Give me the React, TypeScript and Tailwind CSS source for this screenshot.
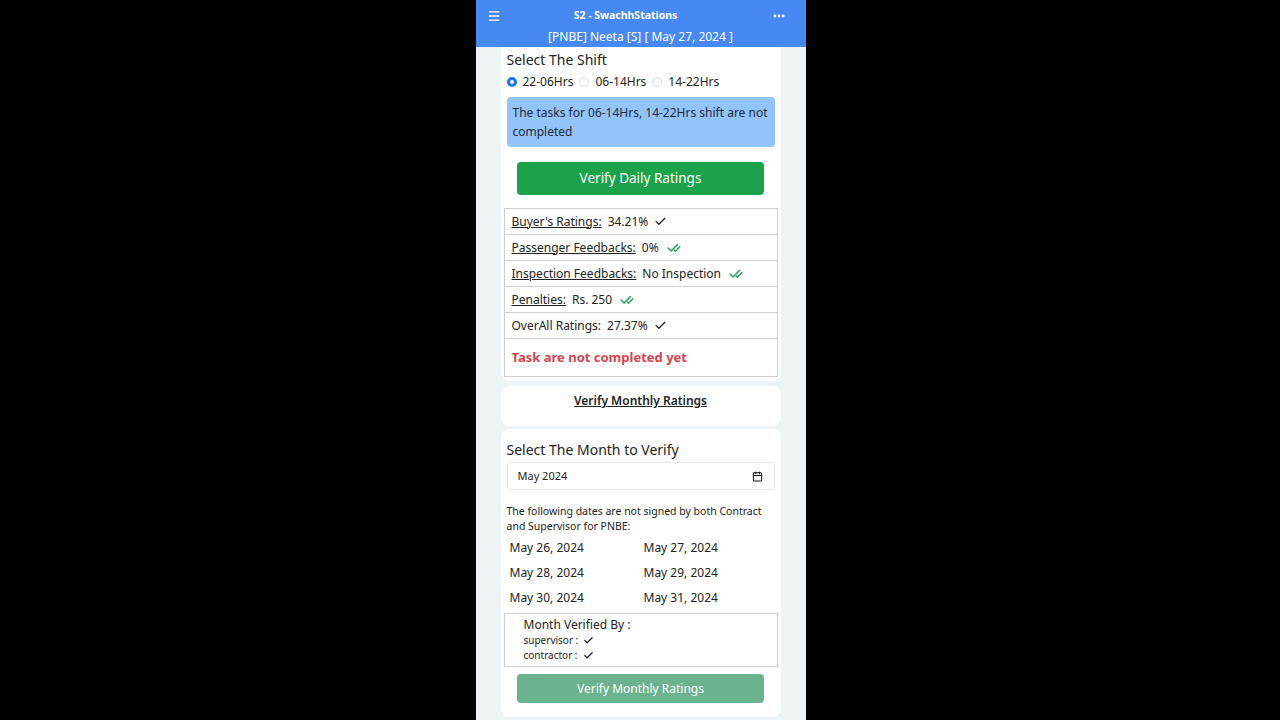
import { Menu, MoreHorizontal, Check, CheckCheck, Calendar } from 'lucide-react';

const ratings = [
  { label: "Buyer's Ratings:", value: '34.21%', double: false, underline: true },
  { label: 'Passenger Feedbacks:', value: '0%', double: true, underline: true },
  { label: 'Inspection Feedbacks:', value: 'No Inspection', double: true, underline: true },
  { label: 'Penalties:', value: 'Rs. 250', double: true, underline: true },
  { label: 'OverAll Ratings:', value: '27.37%', double: false, underline: false },
];

const dates = ['May 26, 2024', 'May 27, 2024', 'May 28, 2024', 'May 29, 2024', 'May 30, 2024', 'May 31, 2024'];

export default function App() {
  return (
    <div className="w-full h-[720px] bg-black flex justify-center overflow-hidden" style={{ fontFamily: '"Noto Sans", "Open Sans", sans-serif' }}>
      <div className="w-[330px] h-[720px] bg-[#eef3f6] flex flex-col overflow-hidden ml-[1px]">
        {/* Header */}
        <div className="h-[47px] shrink-0 bg-[#4689f5] text-white flex flex-col items-center relative">
          <Menu className="absolute left-[11px] top-[9px] w-[14px] h-[14px]" strokeWidth={2.4} />
          <MoreHorizontal className="absolute right-[20px] top-[9px] w-[14px] h-[14px]" strokeWidth={3} />
          <div className="text-[10.5px] font-bold mt-[7px] leading-[16px] -ml-[30px]">S2 - SwachhStations</div>
          <div className="text-[12px] mt-[5px] leading-[18px]">[PNBE] Neeta [S] [ May 27, 2024 ]</div>
        </div>

        <div className="flex-1 px-[25px] flex flex-col gap-[5px]">
          {/* Shift card */}
          <div className="bg-white rounded-b-lg px-[3px] pb-[4px]">
            <div className="px-[3px]">
              <div className="text-[14px] text-[#222] leading-[20px] mt-[3px]">Select The Shift</div>
              <div className="flex items-center text-[12px] text-[#222] leading-[18px] mt-[3px]">
                <span className="w-[10px] h-[10px] rounded-full border-[3px] border-[#1a73e8] bg-white mr-[6px]" />
                <span className="mr-[6px]">22-06Hrs</span>
                <span className="w-[10px] h-[10px] rounded-full border border-[#dcdcdc] mr-[6px]" />
                <span className="mr-[6px]">06-14Hrs</span>
                <span className="w-[10px] h-[10px] rounded-full border border-[#dcdcdc] mr-[6px]" />
                <span>14-22Hrs</span>
              </div>
              <div className="mt-[6px] bg-[#92c3fb] rounded-[4px] px-[6px] py-[6px] text-[12px] leading-[19px] text-[#1f2a37]">
                The tasks for 06-14Hrs, 14-22Hrs shift are not completed
              </div>
              <div className="flex justify-center mt-[15px] mb-[13px]">
                <button className="w-[247px] h-[33px] bg-[#1aa34a] text-white text-[13.5px] rounded-[4px]">Verify Daily Ratings</button>
              </div>
            </div>
            <div className="border border-[#cfcfcf]">
              {ratings.map((r, i) => (
                <div key={i} className="flex items-center h-[26px] px-[7px] border-b border-[#cfcfcf] text-[12px] text-[#222]">
                  <span className={r.underline ? 'underline' : ''}>{r.label}</span>
                  <span className="ml-[6px]">{r.value}</span>
                  {r.double ? (
                    <CheckCheck className="ml-[8px] w-[14px] h-[14px] text-[#22a35a]" strokeWidth={2.6} />
                  ) : (
                    <Check className="ml-[6px] w-[13px] h-[13px] text-[#222]" strokeWidth={2.4} />
                  )}
                </div>
              ))}
              <div className="h-[37px] flex items-center px-[7px] text-[13px] font-bold text-[#d9434a]">Task are not completed yet</div>
            </div>
          </div>

          {/* Monthly link */}
          <div className="bg-white rounded-lg h-[40px] flex justify-center pt-[6px]">
            <span className="text-[12px] font-semibold text-[#222] underline">Verify Monthly Ratings</span>
          </div>

          {/* Monthly card */}
          <div className="bg-white rounded-lg px-[3px] -mt-[2px] pb-[14px]">
            <div className="px-[3px]">
              <div className="text-[14px] text-[#222] leading-[20px] mt-[11px]">Select The Month to Verify</div>
              <div className="mt-[2px] h-[28px] border border-[#e3e6ea] rounded-[4px] flex items-center justify-between pl-[10px] pr-[11px] text-[11px] text-[#222]">
                <span>May 2024</span>
                <Calendar className="w-[11px] h-[11px] text-[#111]" strokeWidth={2.2} />
              </div>
              <div className="mt-[14px] text-[10.5px] leading-[15px] text-[#222]">
                The following dates are not signed by both Contract and Supervisor for PNBE:
              </div>
              <div className="grid grid-cols-[134px_1fr] px-[3px] mt-[1px] text-[12px] text-[#222]">
                {dates.map((d) => (
                  <div key={d} className="h-[25px] flex items-center">{d}</div>
                ))}
              </div>
            </div>
            <div className="mt-[3px] border border-[#cfcfcf] h-[54px] px-[19px] pt-[2px] text-[#222]">
              <div className="text-[12px] leading-[17px]">Month Verified By :</div>
              <div className="flex items-center text-[10px] leading-[15px]">supervisor :<Check className="ml-[5px] w-[11px] h-[11px]" strokeWidth={2.6} /></div>
              <div className="flex items-center text-[10px] leading-[15px]">contractor :<Check className="ml-[5px] w-[11px] h-[11px]" strokeWidth={2.6} /></div>
            </div>
            <div className="flex justify-center mt-[7px]">
              <button className="w-[247px] h-[29px] bg-[#6bb28f] text-white text-[12px] rounded-[4px]">Verify Monthly Ratings</button>
            </div>
          </div>
        </div>
      </div>
    </div>
  );
}
